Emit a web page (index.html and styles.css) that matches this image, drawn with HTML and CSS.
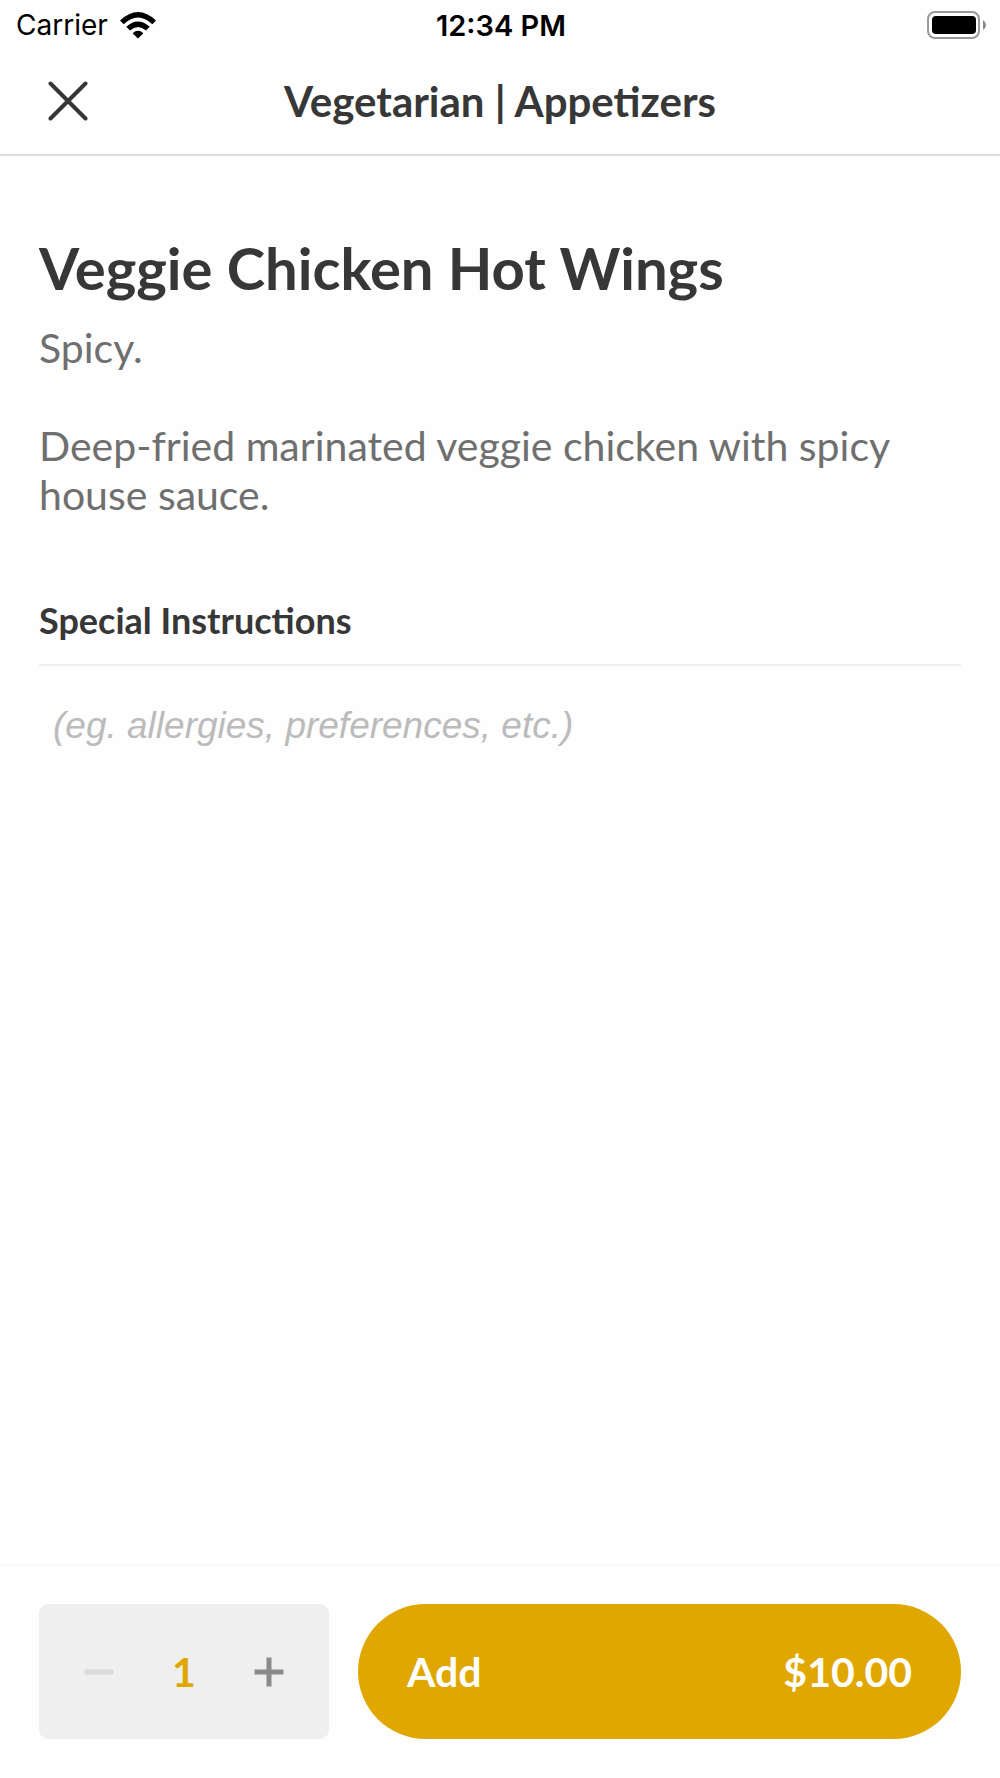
FILE: index.html
```
<!DOCTYPE html>
<html lang="en">
<head>
    <meta charset="UTF-8">
    <meta name="viewport" content="width=device-width, initial-scale=1.0">
    <title>Veggie Chicken Hot Wings</title>
    <link rel="stylesheet" href="styles.css">
</head>
<body>

    <!-- Phone status bar -->
    <div class="status-bar">
        <div class="status-left">
            <span>Carrier</span>
            <svg class="wifi-icon" viewBox="0 0 36 27" aria-hidden="true">
                <path d="M0 8.5 Q18 -8.5 36 8.5 L32.3 12.2 Q18 -1.2 3.7 12.2 Z"/>
                <path d="M6.3 14.8 Q18 4.2 29.7 14.8 L26 18.5 Q18 11.4 10 18.5 Z"/>
                <path d="M12.6 21.2 Q18 16.4 23.4 21.2 L18 26.6 Z"/>
            </svg>
        </div>
        <span class="status-time">12:34 PM</span>
        <div class="status-right">
            <svg class="battery-icon" viewBox="0 0 59 28" aria-hidden="true">
                <rect x="1" y="1" width="51" height="26" rx="7" fill="#fff" stroke="#999" stroke-width="2"/>
                <rect x="5" y="5" width="44" height="18" rx="4" fill="#000"/>
                <path d="M56 9 Q59 11 59 14 Q59 17 56 19 Z" fill="#888"/>
            </svg>
        </div>
    </div>

    <header class="header">
        <button type="button" class="close-button" aria-label="Close">
            <svg class="close-icon" viewBox="0 0 40 40" aria-hidden="true">
                <path d="M2.5 2.5 L37.5 37.5 M37.5 2.5 L2.5 37.5"/>
            </svg>
        </button>
        <h2>Vegetarian | Appetizers</h2>
    </header>

    <main class="item">
        <h1>Veggie Chicken Hot Wings</h1>
        <p class="description">Spicy.</p>
        <p class="description">Deep-fried marinated veggie chicken with spicy house sauce.</p>

        <label class="instructions-label" for="instructions">Special Instructions</label>
        <textarea class="instructions" id="instructions" placeholder="(eg. allergies, preferences, etc.)"></textarea>
    </main>

    <footer class="footer">
        <div class="quantity">
            <button type="button" class="quantity-button" aria-label="Remove one" disabled>
                <svg class="quantity-icon" viewBox="0 0 30 30" aria-hidden="true">
                    <path d="M0.5 15 H29.5"/>
                </svg>
            </button>
            <span class="quantity-value">1</span>
            <button type="button" class="quantity-button" aria-label="Add one">
                <svg class="quantity-icon" viewBox="0 0 30 30" aria-hidden="true">
                    <path d="M0.5 15 H29.5 M15 0.5 V29.5"/>
                </svg>
            </button>
        </div>
        <button type="button" class="add-button">
            <span>Add</span>
            <span>$10.00</span>
        </button>
    </footer>

</body>
</html>
```
FILE: styles.css
```
/* General reset */
* {
    margin: 0;
    padding: 0;
    box-sizing: border-box;
}

body {
    display: flex;
    flex-direction: column;
    min-height: 100vh;
    background-color: #fefefe;
    color: #373737;
    font-family: Lato, sans-serif;
}

button {
    border: none;
    background: none;
    font-family: inherit;
    cursor: pointer;
}

/* Status bar */
.status-bar {
    display: grid;
    grid-template-columns: 1fr auto 1fr;
    align-items: center;
    height: 50px;
    padding: 0 14px 0 16px;
    color: #000;
    font-family: Inter, sans-serif;
    font-size: 28px;
}

.status-left {
    display: flex;
    align-items: center;
    gap: 12px;
}

.status-time {
    font-size: 29px;
    font-weight: 600;
}

.status-right {
    display: flex;
    justify-content: flex-end;
}

.wifi-icon {
    width: 36px;
    height: 27px;
}

.battery-icon {
    width: 59px;
    height: 28px;
}

/* Header */
.header {
    display: grid;
    grid-template-columns: 1fr auto 1fr;
    align-items: center;
    height: 106px;
    padding: 0 40px 3px;
    border-bottom: 2px solid #dcdcdc;
}

.header h2 {
    font-size: 42px;
    font-weight: 700;
}

.close-button {
    display: flex;
    justify-self: start;
    padding: 8px;
}

.close-icon {
    width: 40px;
    height: 40px;
    fill: none;
    stroke: #373737;
    stroke-width: 4;
    stroke-linecap: round;
}

/* Menu item */
.item {
    flex: 1;
    display: flex;
    flex-direction: column;
    padding: 77px 39px 0;
}

.item h1 {
    margin-bottom: 20px;
    font-size: 58px;
    line-height: 70px;
}

.description {
    margin-bottom: 49px;
    color: #6f6f6f;
    font-size: 41px;
    line-height: 49px;
}

.instructions-label {
    margin-top: 30px;
    padding-bottom: 22px;
    border-bottom: 2px solid #efefef;
    font-size: 36px;
    font-weight: 700;
    line-height: 44px;
}

.instructions {
    flex: 1;
    margin-top: 38px;
    padding: 0 14px;
    border: none;
    outline: none;
    resize: none;
    background: none;
    color: #373737;
    font-family: "Liberation Sans", sans-serif;
    font-size: 37px;
    line-height: 44px;
}

.instructions::placeholder {
    color: #bbb;
    font-style: italic;
}

/* Footer */
.footer {
    display: flex;
    gap: 29px;
    padding: 38px 39px 39px;
    border-top: 2px solid #f8f8f8;
}

.quantity {
    flex: 0 0 290px;
    display: flex;
    justify-content: space-between;
    align-items: center;
    height: 135px;
    padding: 0 36px;
    border-radius: 9px;
    background-color: #efefef;
}

.quantity-button {
    display: flex;
    padding: 9px;
}

.quantity-button:disabled {
    opacity: 0.2;
    cursor: default;
}

.quantity-icon {
    width: 30px;
    height: 30px;
    stroke: #8a8a8a;
    stroke-width: 5;
}

.quantity-value {
    color: #dfa700;
    font-size: 41px;
    font-weight: 700;
}

.add-button {
    flex: 1;
    display: flex;
    justify-content: space-between;
    align-items: center;
    padding: 0 49px;
    border-radius: 68px;
    background-color: #dfa700;
    color: #fff;
    font-size: 41px;
    font-weight: 700;
}
```
